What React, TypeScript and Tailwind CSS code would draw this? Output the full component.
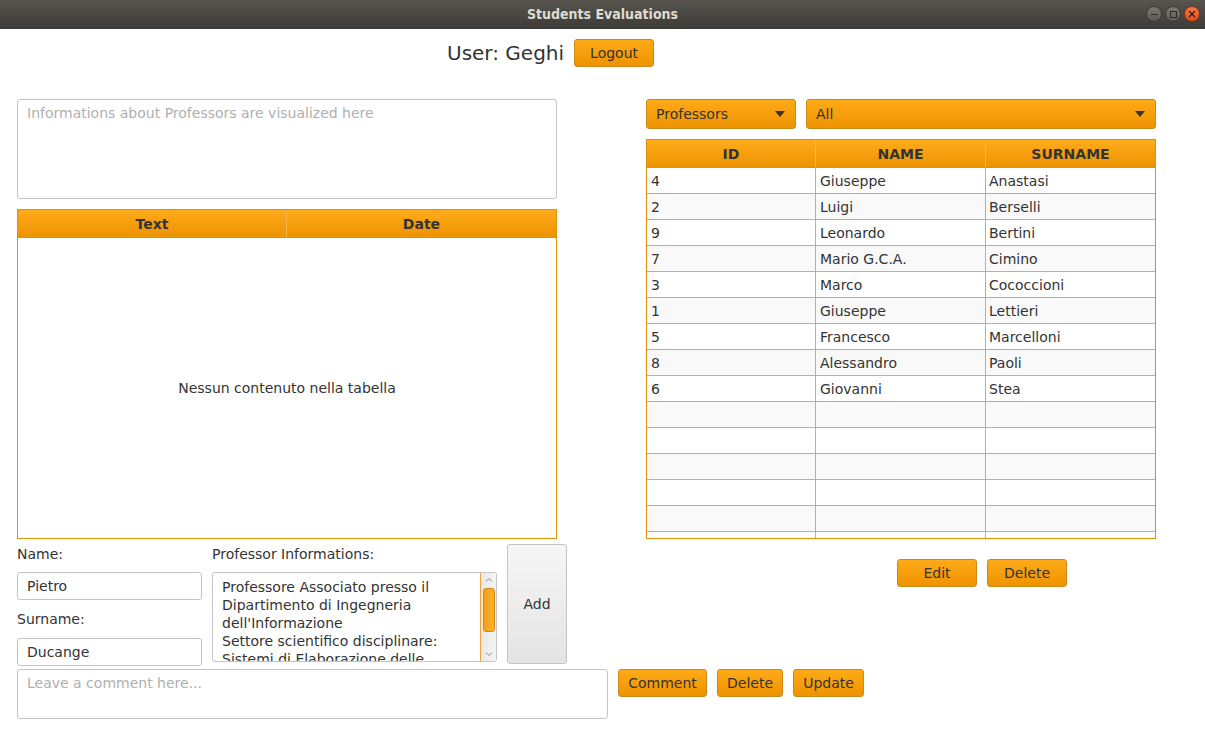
import React from "react";

const font = { fontFamily: '"DejaVu Sans", "Liberation Sans", sans-serif' };

const professors = [
  { id: 4, name: "Giuseppe", surname: "Anastasi" },
  { id: 2, name: "Luigi", surname: "Berselli" },
  { id: 9, name: "Leonardo", surname: "Bertini" },
  { id: 7, name: "Mario G.C.A.", surname: "Cimino" },
  { id: 3, name: "Marco", surname: "Cococcioni" },
  { id: 1, name: "Giuseppe", surname: "Lettieri" },
  { id: 5, name: "Francesco", surname: "Marcelloni" },
  { id: 8, name: "Alessandro", surname: "Paoli" },
  { id: 6, name: "Giovanni", surname: "Stea" },
];

function OrangeButton({ label, className = "" }: { label: string; className?: string }) {
  return (
    <button
      className={
        "h-[28px] rounded-[3px] border border-[#c98a1c] bg-gradient-to-b from-[#ffaa17] to-[#ee9300] text-[14px] text-[#333] " +
        className
      }
    >
      {label}
    </button>
  );
}

function Combo({ label, className = "" }: { label: string; className?: string }) {
  return (
    <div
      className={
        "flex h-[30px] items-center justify-between rounded-[3px] border border-[#c98a1c] bg-gradient-to-b from-[#ffaa17] to-[#ee9300] pl-[9px] pr-[10px] text-[14px] text-[#333] " +
        className
      }
    >
      <span>{label}</span>
      <svg width="10" height="6" viewBox="0 0 10 6">
        <path d="M0 0 H10 L5 6 Z" fill="#3a3326" />
      </svg>
    </div>
  );
}

function HeaderCell({ label, last = false }: { label: string; last?: boolean }) {
  return (
    <div
      className={
        "flex items-center justify-center bg-gradient-to-b from-[#ffab1a] to-[#ec9300] pt-[2px] text-[14px] font-bold text-[#333] " +
        (last ? "" : "border-r border-[#f7b54a]")
      }
    >
      {label}
    </div>
  );
}

export default function App() {
  const rows = Array.from({ length: 15 }, (_, i) => professors[i]);
  return (
    <div className="h-[729px] w-[1205px] overflow-hidden bg-white" style={font}>
      {/* window title bar */}
      <div className="relative flex h-[29px] items-center justify-center bg-gradient-to-b from-[#58554f] to-[#3c3b37]">
        <span
          className="text-[14px] font-bold text-[#dfdbd2]"
          style={{ fontFamily: '"DejaVu Sans Condensed", "DejaVu Sans", sans-serif' }}
        >
          Students Evaluations
        </span>
        <div className="absolute right-[5px] top-[6px] flex gap-[3px]">
          <div className="flex h-[16px] w-[16px] items-center justify-center rounded-full bg-gradient-to-b from-[#7c7a74] to-[#5c5a55] border border-[#3a3935]">
            <div className="h-[1px] w-[7px] bg-[#2e2d2a]" />
          </div>
          <div className="flex h-[16px] w-[16px] items-center justify-center rounded-full bg-gradient-to-b from-[#7c7a74] to-[#5c5a55] border border-[#3a3935]">
            <div className="h-[7px] w-[7px] border border-[#2e2d2a]" />
          </div>
          <div className="flex h-[16px] w-[16px] items-center justify-center rounded-full bg-gradient-to-b from-[#f47a4a] to-[#df4a17] border border-[#8c3010]">
            <svg width="8" height="8" viewBox="0 0 8 8">
              <path d="M1 1 L7 7 M7 1 L1 7" stroke="#3a1a0a" strokeWidth="1.3" />
            </svg>
          </div>
        </div>
      </div>

      {/* user header */}
      <div className="mt-[10px] flex h-[28px] items-center gap-[10px] pl-[447px]">
        <span className="text-[20px] leading-none text-[#333]">User: Geghi</span>
        <OrangeButton label="Logout" className="w-[80px]" />
      </div>

      <div className="mt-[32px] flex pl-[17px]">
        {/* left column */}
        <div className="flex w-[550px] flex-col">
          <div className="h-[100px] w-[540px] rounded-[3px] border border-[#c4c4c4] px-[9px] pt-[3px] text-[14px] text-[#b0b0b0]">
            Informations about Professors are visualized here
          </div>
          <div className="mt-[10px] flex h-[330px] w-[540px] flex-col border border-[#e0900a]">
            <div className="grid h-[28px] grid-cols-2 border-b border-[#e0900a]">
              <HeaderCell label="Text" />
              <HeaderCell label="Date" last />
            </div>
            <div className="flex flex-1 items-center justify-center text-[14px] text-[#333]">
              Nessun contenuto nella tabella
            </div>
          </div>

          <div className="mt-[5px] flex gap-[10px]">
            <div className="flex w-[185px] flex-col text-[14px] text-[#333]">
              <span className="mt-[2px] leading-[16px]">Name:</span>
              <div className="mt-[10px] flex h-[28px] items-center rounded-[3px] border border-[#c4c4c4] pl-[9px]">
                Pietro
              </div>
              <span className="mt-[11px] leading-[16px]">Surname:</span>
              <div className="mt-[11px] flex h-[28px] items-center rounded-[3px] border border-[#c4c4c4] pl-[9px]">
                Ducange
              </div>
            </div>
            <div className="flex w-[285px] flex-col text-[14px] text-[#333]">
              <span className="mt-[2px] leading-[16px]">Professor Informations:</span>
              <div className="mt-[10px] flex h-[90px] overflow-hidden rounded-[3px] border border-[#c4c4c4]">
                <div className="flex-1 overflow-hidden pl-[9px] pt-[5px] leading-[18px]">
                  Professore Associato presso il
                  <br />
                  Dipartimento di Ingegneria
                  <br />
                  dell'Informazione
                  <br />
                  Settore scientifico disciplinare:
                  <br />
                  Sistemi di Elaborazione delle
                  <br />
                  Informazioni
                </div>
                <div className="flex w-[16px] flex-col items-center border-l border-[#eba33a] bg-gradient-to-r from-[#e8e8e8] to-[#f4f4f4]">
                  <svg width="10" height="10" viewBox="0 0 10 10" className="mt-[2px]">
                    <path d="M2 6.5 L5 3.5 L8 6.5" stroke="#8a8a8a" fill="none" strokeWidth="1" />
                  </svg>
                  <div className="mt-[3px] h-[44px] w-[12px] rounded-[3px] border border-[#cc8a14] bg-gradient-to-r from-[#f6a019] to-[#fdb02c]" />
                  <div className="flex-1" />
                  <svg width="10" height="10" viewBox="0 0 10 10" className="mb-[2px]">
                    <path d="M2 3.5 L5 6.5 L8 3.5" stroke="#8a8a8a" fill="none" strokeWidth="1" />
                  </svg>
                </div>
              </div>
            </div>
            <button className="h-[120px] w-[60px] rounded-[3px] border border-[#c4c4c4] bg-gradient-to-b from-[#f6f6f6] to-[#e4e4e4] text-[14px] text-[#333]">
              Add
            </button>
          </div>
        </div>

        {/* right column */}
        <div className="ml-[79px] flex w-[510px] flex-col">
          <div className="flex gap-[10px]">
            <Combo label="Professors" className="w-[150px]" />
            <Combo label="All" className="flex-1" />
          </div>
          <div className="mt-[10px] flex h-[400px] flex-col overflow-hidden border border-[#e0900a]">
            <div className="grid h-[28px] shrink-0 grid-cols-[169px_170px_1fr] border-b border-[#e0900a]">
              <HeaderCell label="ID" />
              <HeaderCell label="NAME" />
              <HeaderCell label="SURNAME" last />
            </div>
            {rows.map((p, i) => (
              <div
                key={i}
                className={
                  "grid h-[26px] shrink-0 grid-cols-[169px_170px_1fr] border-b border-[#f2a53a] text-[14px] text-[#333] " +
                  (i % 2 === 0 ? "bg-white" : "bg-[#f9f9f9]")
                }
              >
                <div className="flex items-center border-r border-[#f2a53a] pl-[4px] pt-[2px]">{p?.id}</div>
                <div className="flex items-center border-r border-[#f2a53a] pl-[4px] pt-[2px]">{p?.name}</div>
                <div className="flex items-center pl-[3px] pt-[2px]">{p?.surname}</div>
              </div>
            ))}
          </div>
          <div className="mt-[20px] flex gap-[10px] pl-[251px]">
            <OrangeButton label="Edit" className="w-[80px]" />
            <OrangeButton label="Delete" className="w-[80px]" />
          </div>
        </div>
      </div>

      {/* comment row */}
      <div className="mt-[3px] flex gap-[10px] pl-[17px]">
        <div className="h-[50px] w-[591px] rounded-[3px] border border-[#c4c4c4] px-[9px] pt-[3px] text-[14px] text-[#b0b0b0]">
          Leave a comment here...
        </div>
        <OrangeButton label="Comment" className="w-[89px]" />
        <OrangeButton label="Delete" className="w-[66px]" />
        <OrangeButton label="Update" className="w-[71px]" />
      </div>
    </div>
  );
}
